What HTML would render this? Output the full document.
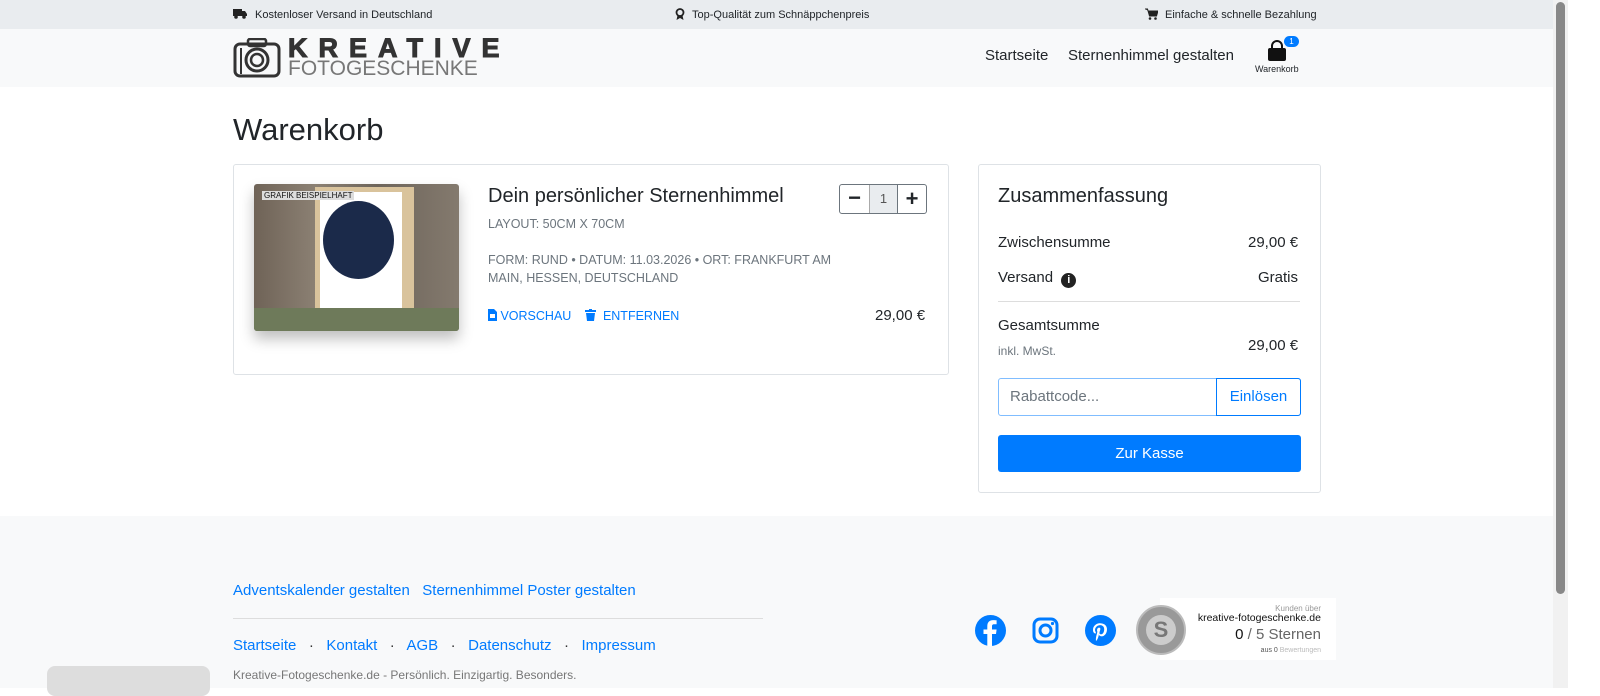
<!DOCTYPE html>
<html><head><meta charset="utf-8"><style>
*{box-sizing:border-box;margin:0;padding:0}
body{width:1600px;height:688px;overflow:hidden;background:#fff;font-family:"Liberation Sans",sans-serif;position:relative;color:#212529}
.a{position:absolute}
.blue{color:#007bff}
</style></head><body>
<div class="a" style="left:0;top:0;width:1553px;height:29px;background:#e9ecef"></div>
<div class="a" style="left:0;top:29px;width:1553px;height:58px;background:#f8f9fa"></div>
<div class="a" style="left:0;top:516px;width:1553px;height:172px;background:#f8f9fa"></div>
<div class="a" style="left:1553px;top:0;width:15px;height:688px;background:#f1f1f1"></div>
<div class="a" style="left:1556px;top:2px;width:9px;height:592px;background:#888;border-radius:5px"></div>
<div class="a" style="left:1568px;top:0;width:32px;height:688px;background:#fff"></div>

<div class="a" style="left:233px;top:8px;font-size:11px"><svg width="14" height="11" viewBox="0 0 14 11" style="margin-right:8px;vertical-align:-1px"><path d="M0 1h9v7H0z M9 3h3l2 3v2H9z" fill="#222"/><circle cx="3" cy="9" r="1.8" fill="#222"/><circle cx="11" cy="9" r="1.8" fill="#222"/></svg>Kostenloser Versand in Deutschland</div>
<div class="a" style="left:675px;top:8px;font-size:11px"><svg width="10" height="12" viewBox="0 0 10 12" style="margin-right:7px;vertical-align:-2px"><circle cx="5" cy="4.5" r="3.5" fill="none" stroke="#222" stroke-width="1.8"/><path d="M2.5 7.5L1.5 12l3.5-2 3.5 2-1-4.5" fill="#222"/></svg>Top-Qualität zum Schnäppchenpreis</div>
<div class="a" style="left:1145px;top:8px;font-size:11px"><svg width="13" height="12" viewBox="0 0 13 12" style="margin-right:7px;vertical-align:-2px"><path d="M0 1h2.5l2 7h7l1.5-5H3.5" fill="#222" stroke="#222" stroke-width="1"/><circle cx="5" cy="10.5" r="1.3" fill="#222"/><circle cx="10.5" cy="10.5" r="1.3" fill="#222"/></svg>Einfache &amp; schnelle Bezahlung</div>

<svg class="a" style="left:233px;top:38px" width="48" height="40" viewBox="0 0 48 40"><rect x="2" y="6" width="44" height="32" rx="5" fill="none" stroke="#333" stroke-width="3"/><rect x="15" y="1" width="18" height="7" rx="2" fill="none" stroke="#333" stroke-width="2.5"/><circle cx="24" cy="22" r="11" fill="none" stroke="#333" stroke-width="3"/><circle cx="24" cy="22" r="6" fill="none" stroke="#333" stroke-width="2.5"/><line x1="8" y1="10" x2="8" y2="36" stroke="#333" stroke-width="2"/></svg>
<div class="a" style="left:288px;top:33px;font-size:27px;font-weight:900;letter-spacing:11px;color:#333;-webkit-text-stroke:1px #333">KREATIVE</div>
<div class="a" style="left:288px;top:57px;font-size:21px;color:#777;letter-spacing:0px">FOTOGESCHENKE</div>

<div class="a" style="left:985px;top:47px;font-size:15px">Startseite</div>
<div class="a" style="left:1068px;top:47px;font-size:15px">Sternenhimmel gestalten</div>
<svg class="a" style="left:1266px;top:40px" width="22" height="22" viewBox="0 0 22 22"><path d="M6 8V6a5 5 0 0 1 10 0v2" fill="none" stroke="#111" stroke-width="2"/><rect x="2" y="8" width="18" height="13" rx="2" fill="#111"/></svg>
<div class="a" style="left:1284px;top:36px;width:15px;height:11px;border-radius:6px;background:#007bff;color:#fff;font-size:8px;text-align:center;line-height:11px">1</div>
<div class="a" style="left:1255px;top:64px;font-size:9px">Warenkorb</div>

<div class="a" style="left:233px;top:112px;font-size:31px">Warenkorb</div>

<div class="a" style="left:233px;top:164px;width:716px;height:211px;border:1px solid #dee2e6;border-radius:3px"></div>
<div class="a" style="left:254px;top:184px;width:205px;height:147px;background:linear-gradient(90deg,#6f6357,#8b8073 30%,#6d645a 60%,#847a6e);border-radius:3px;box-shadow:0 8px 14px rgba(0,0,0,.25);overflow:hidden">
 <div class="a" style="left:61px;top:3px;width:99px;height:128px;background:#d9c39c"></div>
 <div class="a" style="left:66px;top:8px;width:82px;height:120px;background:#fff"></div>
 <div class="a" style="left:69px;top:17px;width:71px;height:78px;border-radius:50%;background:#1b2a4a"></div>
 <div class="a" style="left:0;top:124px;width:205px;height:23px;background:#6e7a5a"></div>
 <div class="a" style="left:8px;top:7px;font-size:8px;background:#ddd;color:#111;padding:0 2px">GRAFIK BEISPIELHAFT</div>
</div>
<div class="a" style="left:488px;top:185px;font-size:20px">Dein persönlicher Sternenhimmel</div>
<div class="a" style="left:488px;top:217px;font-size:12.5px;color:#6c757d">LAYOUT: 50CM X 70CM</div>
<div class="a" style="left:488px;top:251px;font-size:12.5px;color:#6c757d;line-height:18px;width:360px">FORM: RUND • DATUM: 11.03.2026 • ORT: FRANKFURT AM MAIN, HESSEN, DEUTSCHLAND</div>
<div class="a blue" style="left:488px;top:309px;font-size:12.5px"><svg width="9" height="12" viewBox="0 0 9 12" style="vertical-align:-1px"><path d="M0 0h6l3 3v9H0z" fill="#007bff"/><rect x="2" y="5" width="5" height="4" fill="#fff"/></svg> VORSCHAU</div>
<div class="a blue" style="left:585px;top:309px;font-size:12.5px"><svg width="11" height="12" viewBox="0 0 11 12" style="vertical-align:-1px"><rect x="0" y="1" width="11" height="2" fill="#007bff"/><rect x="4" y="0" width="3" height="1" fill="#007bff"/><path d="M1 4h9l-1 8H2z" fill="#007bff"/></svg> &nbsp;ENTFERNEN</div>
<div class="a" style="left:875px;top:307px;font-size:15px">29,00 €</div>
<div class="a" style="left:839px;top:184px;width:88px;height:30px;border:1px solid #6c757d;border-radius:3px;display:flex">
 <div style="width:29px;text-align:center;font-size:22px;line-height:26px;font-weight:bold">−</div>
 <div style="width:29px;background:#e9ecef;border-left:1px solid #aaa;border-right:1px solid #6c757d;text-align:center;font-size:13px;line-height:28px;color:#555">1</div>
 <div style="width:28px;text-align:center;font-size:22px;line-height:27px;font-weight:bold">+</div>
</div>

<div class="a" style="left:978px;top:164px;width:343px;height:329px;border:1px solid #dee2e6;border-radius:3px"></div>
<div class="a" style="left:998px;top:185px;font-size:20px">Zusammenfassung</div>
<div class="a" style="left:998px;top:234px;font-size:15px">Zwischensumme</div>
<div class="a" style="left:1248px;top:234px;font-size:15px">29,00 €</div>
<div class="a" style="left:998px;top:269px;font-size:15px">Versand <span style="display:inline-block;width:15px;height:15px;border-radius:50%;background:#222;color:#fff;font-size:11px;text-align:center;line-height:15px;font-weight:bold;margin-left:4px;vertical-align:-1px">i</span></div>
<div class="a" style="left:1258px;top:269px;font-size:15px">Gratis</div>
<div class="a" style="left:998px;top:301px;width:302px;height:1px;background:#ddd"></div>
<div class="a" style="left:998px;top:317px;font-size:15px">Gesamtsumme</div>
<div class="a" style="left:998px;top:344px;font-size:12px;color:#6c757d">inkl. MwSt.</div>
<div class="a" style="left:1248px;top:337px;font-size:15px">29,00 €</div>
<div class="a" style="left:998px;top:378px;width:303px;height:38px;border:1px solid #80bdff;border-radius:3px"></div>
<div class="a" style="left:1010px;top:388px;font-size:15px;color:#6c757d">Rabattcode...</div>
<div class="a" style="left:1216px;top:378px;width:85px;height:38px;border:1px solid #007bff;border-radius:0 3px 3px 0;color:#007bff;font-size:15px;text-align:center;line-height:36px">Einlösen</div>
<div class="a" style="left:998px;top:435px;width:303px;height:37px;background:#007bff;border-radius:3px;color:#fff;font-size:15px;text-align:center;line-height:37px">Zur Kasse</div>

<div class="a blue" style="left:233px;top:582px;font-size:15px">Adventskalender gestalten &nbsp; Sternenhimmel Poster gestalten</div>
<div class="a" style="left:233px;top:618px;width:530px;height:1px;background:#ddd"></div>
<div class="a" style="left:233px;top:637px;font-size:15px;color:#333"><span class="blue">Startseite</span> &nbsp; · &nbsp; <span class="blue">Kontakt</span> &nbsp; · &nbsp; <span class="blue">AGB</span> &nbsp; · &nbsp; <span class="blue">Datenschutz</span> &nbsp; · &nbsp; <span class="blue">Impressum</span></div>
<div class="a" style="left:233px;top:668px;font-size:12px;color:#777">Kreative-Fotogeschenke.de - Persönlich. Einzigartig. Besonders.</div>
<div class="a" style="left:47px;top:666px;width:163px;height:30px;background:#ddd;border-radius:8px"></div>

<svg class="a" style="left:975px;top:615px" width="31" height="31" viewBox="0 0 31 31"><circle cx="15.5" cy="15.5" r="15.5" fill="#007bff"/><path d="M17 31V19h4l.6-4.5H17v-3c0-1.3.4-2.2 2.2-2.2h2.4V5.3c-.4 0-1.8-.2-3.5-.2-3.5 0-5.8 2.1-5.8 6v3.4H8.5V19h3.8v12z" fill="#fff"/></svg>
<svg class="a" style="left:1032px;top:617px" width="27" height="27" viewBox="0 0 27 27"><rect x="2" y="2" width="23" height="23" rx="6" fill="none" stroke="#007bff" stroke-width="3"/><circle cx="13.5" cy="13.5" r="5.5" fill="none" stroke="#007bff" stroke-width="3"/><circle cx="20.5" cy="6.5" r="1.6" fill="#007bff"/></svg>
<svg class="a" style="left:1085px;top:615px" width="31" height="31" viewBox="0 0 31 31"><circle cx="15.5" cy="15.5" r="15.5" fill="#007bff"/><path d="M14 19c-.6 3-1.3 5.7-3 7 -.5-3.6.8-6.3 1.4-9.2-1-1.6.1-4.9 2.2-4.1 2.5 1-2.2 6 1 6.6 3.3.7 4.7-5.8 2.6-7.9-3-3.1-8.8-.1-8.1 4.3.2 1.1 1.3 1.4.4 2.9-2-.4-2.6-2-2.5-4.1.1-3.4 3.1-5.8 6.1-6.2 3.8-.4 7.3 1.4 7.8 5 .5 4-1.7 8.3-5.7 8-1.1-.1-1.5-.6-2.2-1.3z" fill="#fff"/></svg>
<div class="a" style="left:1160px;top:598px;width:176px;height:62px;background:#fff"></div>
<div class="a" style="left:1136px;top:605px;width:50px;height:50px;border-radius:50%;background:#999;border:2px solid #bbb"></div>
<div class="a" style="left:1146px;top:615px;width:30px;height:30px;border-radius:50%;background:#ccc;color:#777;font-size:22px;font-weight:bold;text-align:center;line-height:30px">S</div>
<div class="a" style="left:1200px;top:604px;width:121px;text-align:right;font-size:8px;color:#999">Kunden über</div>
<div class="a" style="left:1190px;top:612px;width:131px;text-align:right;font-size:10.5px;color:#111">kreative-fotogeschenke.de</div>
<div class="a" style="left:1200px;top:626px;width:121px;text-align:right;font-size:15px;color:#666"><span style="color:#111">0</span> / 5 Sternen</div>
<div class="a" style="left:1200px;top:647px;width:121px;text-align:right;font-size:7px;color:#bbb"><span style="color:#555">aus 0</span> Bewertungen</div>
</body></html>
